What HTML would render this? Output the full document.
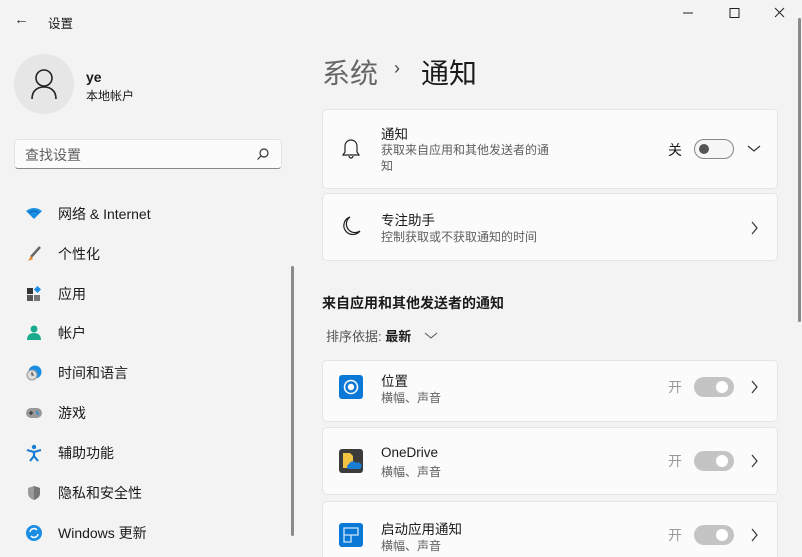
<!DOCTYPE html>
<html style="overflow:hidden;width:802px;height:557px"><head><meta charset="utf-8"><style>
*{margin:0;padding:0;box-sizing:border-box}
body{width:802px;height:557px;overflow:hidden;background:#f3f3f3;font-family:"Liberation Sans","Noto Sans CJK SC",sans-serif;color:#1a1a1a;position:relative;font-size:14px}
.a{position:absolute}
.card{position:absolute;left:322px;width:456px;background:#fbfbfb;border:1px solid #e5e5e5;border-radius:5px}
.t{font-size:13.5px;color:#1a1a1a}
.s{font-size:12px;color:#606060}
.nav{position:absolute;left:26px;height:20px;display:flex;align-items:center}
.nav span{position:absolute;left:32px;white-space:nowrap;font-size:14px}
.tog{position:absolute;width:40px;height:20px;border-radius:10px}
</style></head><body>
<div class="a" style="left:14px;top:11px;font-size:15px;color:#444">&#8592;</div>
<div class="a" style="left:48px;top:13px;font-size:12.5px">设置</div>
<svg class="a" style="left:680px;top:6px" width="110" height="16"><line x1="3" y1="7" x2="13" y2="7" stroke="#222"/><rect x="50" y="2.5" width="9" height="9" fill="none" stroke="#222"/><path d="M95 2l9 9M104 2l-9 9" stroke="#222"/></svg>
<div class="a" style="left:14px;top:54px;width:60px;height:60px;border-radius:50%;background:#e6e6e6"></div>
<svg class="a" style="left:30px;top:68px" width="28" height="32"><circle cx="14" cy="10" r="8" fill="none" stroke="#222" stroke-width="1.6"/><path d="M2 31c0-8 5-12 12-12s12 4 12 12" fill="none" stroke="#222" stroke-width="1.6"/></svg>
<div class="a" style="left:86px;top:69px;font-size:14px;font-weight:bold">ye</div>
<div class="a" style="left:86px;top:87px;font-size:12px">本地帐户</div>
<div class="a" style="left:14px;top:139px;width:268px;height:30px;background:#fbfbfb;border:1px solid #e2e2e2;border-bottom-color:#888;border-radius:4px"></div>
<div class="a" style="left:25px;top:145px;font-size:14px;color:#606060">查找设置</div>
<svg class="a" style="left:256px;top:147px" width="14" height="14"><circle cx="8" cy="6" r="4" fill="none" stroke="#333" stroke-width="1.2"/><path d="M5 9l-3.5 3.5" stroke="#333" stroke-width="1.2"/></svg>
<div class="a" style="left:291px;top:266px;width:3px;height:270px;background:#8a8a8a;border-radius:2px"></div>
<div class="a" style="left:798px;top:18px;width:3px;height:304px;background:#8a8a8a;border-radius:2px"></div>

<div class="nav" style="top:204px"><svg width="16" height="14"><path d="M0 4Q8-2 16 4L8 12Z" fill="#1a8ee3"/><path d="M3 6Q8 2 13 6" stroke="#0a5fb0" fill="none"/></svg><span>网络 &amp; Internet</span></div>
<div class="nav" style="top:244px"><svg width="16" height="16"><path d="M14 1L5 11" stroke="#666" stroke-width="2.5"/><path d="M5 10l-3 5 5-2z" fill="#e8832a"/></svg><span>个性化</span></div>
<div class="nav" style="top:284px"><svg width="16" height="16"><rect x="1" y="2" width="6" height="6" fill="#333"/><rect x="1" y="9" width="6" height="6" fill="#555"/><rect x="8" y="9" width="6" height="6" fill="#777"/><rect x="9" y="1" width="5" height="5" fill="#1a8ee3" transform="rotate(45 11.5 3.5)"/></svg><span>应用</span></div>
<div class="nav" style="top:323px"><svg width="16" height="16"><circle cx="8" cy="4" r="3.5" fill="#1aab8c"/><path d="M1 15c0-5 3-7 7-7s7 2 7 7z" fill="#1aab8c"/></svg><span>帐户</span></div>
<div class="nav" style="top:363px"><svg width="16" height="16"><circle cx="9" cy="7" r="6.5" fill="#1a8ee3"/><circle cx="6" cy="10" r="5" fill="#ddd" stroke="#999"/><path d="M6 7v3h2" stroke="#333" fill="none"/></svg><span>时间和语言</span></div>
<div class="nav" style="top:403px"><svg width="16" height="12"><rect x="0" y="1" width="16" height="10" rx="5" fill="#999"/><path d="M3 6h4M5 4v4" stroke="#222"/><circle cx="11" cy="5" r="1" fill="#1a8ee3"/><circle cx="12" cy="7" r="1" fill="#1a8ee3"/></svg><span>游戏</span></div>
<div class="nav" style="top:443px"><svg width="16" height="18"><circle cx="8" cy="3" r="2.2" fill="#1a7dd4"/><path d="M1 6l7 2 7-2M8 8v4l-4 5M8 12l4 5" stroke="#1a7dd4" stroke-width="2.2" fill="none"/></svg><span>辅助功能</span></div>
<div class="nav" style="top:483px"><svg width="16" height="16"><path d="M8 1l6 2v5c0 4-3 6-6 7-3-1-6-3-6-7V3z" fill="#999"/><path d="M8 1v14c3-1 6-3 6-7V3z" fill="#777"/></svg><span>隐私和安全性</span></div>
<div class="nav" style="top:523px"><svg width="16" height="16"><circle cx="8" cy="8" r="8" fill="#1a8ee3"/><path d="M4 7a4 4 0 0 1 7-2M12 9a4 4 0 0 1-7 2" stroke="#fff" stroke-width="1.5" fill="none"/></svg><span>Windows 更新</span></div>

<div class="a" style="left:322px;top:52px;font-size:28px;color:#666">系统</div>
<div class="a" style="left:394px;top:58px;font-size:18px;color:#444">›</div>
<div class="a" style="left:421px;top:52px;font-size:28px;color:#1a1a1a">通知</div>

<div class="card" style="top:109px;height:80px"></div>
<svg class="a" style="left:341px;top:137px" width="20" height="24"><path d="M4 15V9a6 6 0 0 1 12 0v6l2 3H2z" fill="none" stroke="#222" stroke-width="1.2"/><path d="M8 19a2 2 0 0 0 4 0" fill="none" stroke="#222" stroke-width="1.2"/></svg>
<div class="a t" style="left:381px;top:123px">通知</div>
<div class="a s" style="left:381px;top:142px;width:175px;line-height:16px">获取来自应用和其他发送者的通知</div>
<div class="a" style="left:668px;top:140px;font-size:14px">关</div>
<div class="tog" style="left:694px;top:139px;border:1px solid #888;background:#f6f6f6"></div>
<div class="a" style="left:699px;top:144px;width:10px;height:10px;border-radius:50%;background:#555"></div>
<svg class="a" style="left:747px;top:144px" width="14" height="10"><path d="M1 2l6 5 6-5" fill="none" stroke="#333" stroke-width="1.2"/></svg>

<div class="card" style="top:193px;height:68px"></div>
<svg class="a" style="left:341px;top:215px" width="22" height="24"><path d="M9 2a9 9 0 1 0 10 14A8 8 0 0 1 9 2z" fill="none" stroke="#222" stroke-width="1.2"/></svg>
<div class="a t" style="left:381px;top:209px">专注助手</div>
<div class="a s" style="left:381px;top:228px">控制获取或不获取通知的时间</div>
<svg class="a" style="left:750px;top:221px" width="10" height="14"><path d="M2 1l5 6-5 6" fill="none" stroke="#333" stroke-width="1.2"/></svg>

<div class="a" style="left:322px;top:293px;font-size:14px;font-weight:bold">来自应用和其他发送者的通知</div>
<div class="a" style="left:326px;top:326px;font-size:13px;color:#555">排序依据: <b style="color:#1a1a1a">最新</b></div>
<svg class="a" style="left:424px;top:331px" width="14" height="10"><path d="M1 2l6 5 6-5" fill="none" stroke="#555" stroke-width="1"/></svg>

<div class="card" style="top:360px;height:62px"></div>
<div class="card" style="top:427px;height:68px"></div>
<div class="card" style="top:501px;height:56px;border-bottom:none;border-radius:5px 5px 0 0"></div>

<div class="a" style="left:339px;top:375px;width:24px;height:24px;background:#0a78d7;border-radius:3px"></div>
<svg class="a" style="left:339px;top:375px" width="24" height="24"><circle cx="12" cy="12" r="6.5" fill="none" stroke="#fff" stroke-width="1.5"/><circle cx="12" cy="12" r="3.2" fill="#fff"/></svg>
<div class="a t" style="left:381px;top:370px">位置</div>
<div class="a s" style="left:381px;top:389px">横幅、声音</div>

<div class="a" style="left:339px;top:449px;width:24px;height:24px;background:#3b3b3b;border-radius:3px"></div>
<svg class="a" style="left:339px;top:449px" width="24" height="24"><path d="M4 4h7l3 3v12H4z" fill="#f3c343"/><path d="M9 20a3 3 0 0 1 1-5 4 4 0 0 1 7-1 3 3 0 0 1 4 6z" fill="#1a7dd4"/></svg>
<div class="a t" style="left:381px;top:445px">OneDrive</div>
<div class="a s" style="left:381px;top:463px">横幅、声音</div>

<div class="a" style="left:339px;top:523px;width:24px;height:24px;background:#0a78d7;border-radius:3px"></div>
<svg class="a" style="left:339px;top:523px" width="24" height="24"><path d="M5 5h14v7H12v7H5zM5 12h7" fill="none" stroke="#cfe6fb" stroke-width="1.3"/></svg>
<div class="a t" style="left:381px;top:518px">启动应用通知</div>
<div class="a s" style="left:381px;top:537px">横幅、声音</div>

<div class="a" style="left:668px;top:377px;color:#999">开</div>
<div class="tog" style="left:694px;top:377px;background:#c4c4c4"></div><div class="a" style="left:716px;top:381px;width:12px;height:12px;border-radius:50%;background:#fff"></div>
<svg class="a" style="left:750px;top:380px" width="10" height="14"><path d="M2 1l5 6-5 6" fill="none" stroke="#333" stroke-width="1.2"/></svg>
<div class="a" style="left:668px;top:451px;color:#999">开</div>
<div class="tog" style="left:694px;top:451px;background:#c4c4c4"></div><div class="a" style="left:716px;top:455px;width:12px;height:12px;border-radius:50%;background:#fff"></div>
<svg class="a" style="left:750px;top:454px" width="10" height="14"><path d="M2 1l5 6-5 6" fill="none" stroke="#333" stroke-width="1.2"/></svg>
<div class="a" style="left:668px;top:525px;color:#999">开</div>
<div class="tog" style="left:694px;top:525px;background:#c4c4c4"></div><div class="a" style="left:716px;top:529px;width:12px;height:12px;border-radius:50%;background:#fff"></div>
<svg class="a" style="left:750px;top:528px" width="10" height="14"><path d="M2 1l5 6-5 6" fill="none" stroke="#333" stroke-width="1.2"/></svg>
</body></html>
